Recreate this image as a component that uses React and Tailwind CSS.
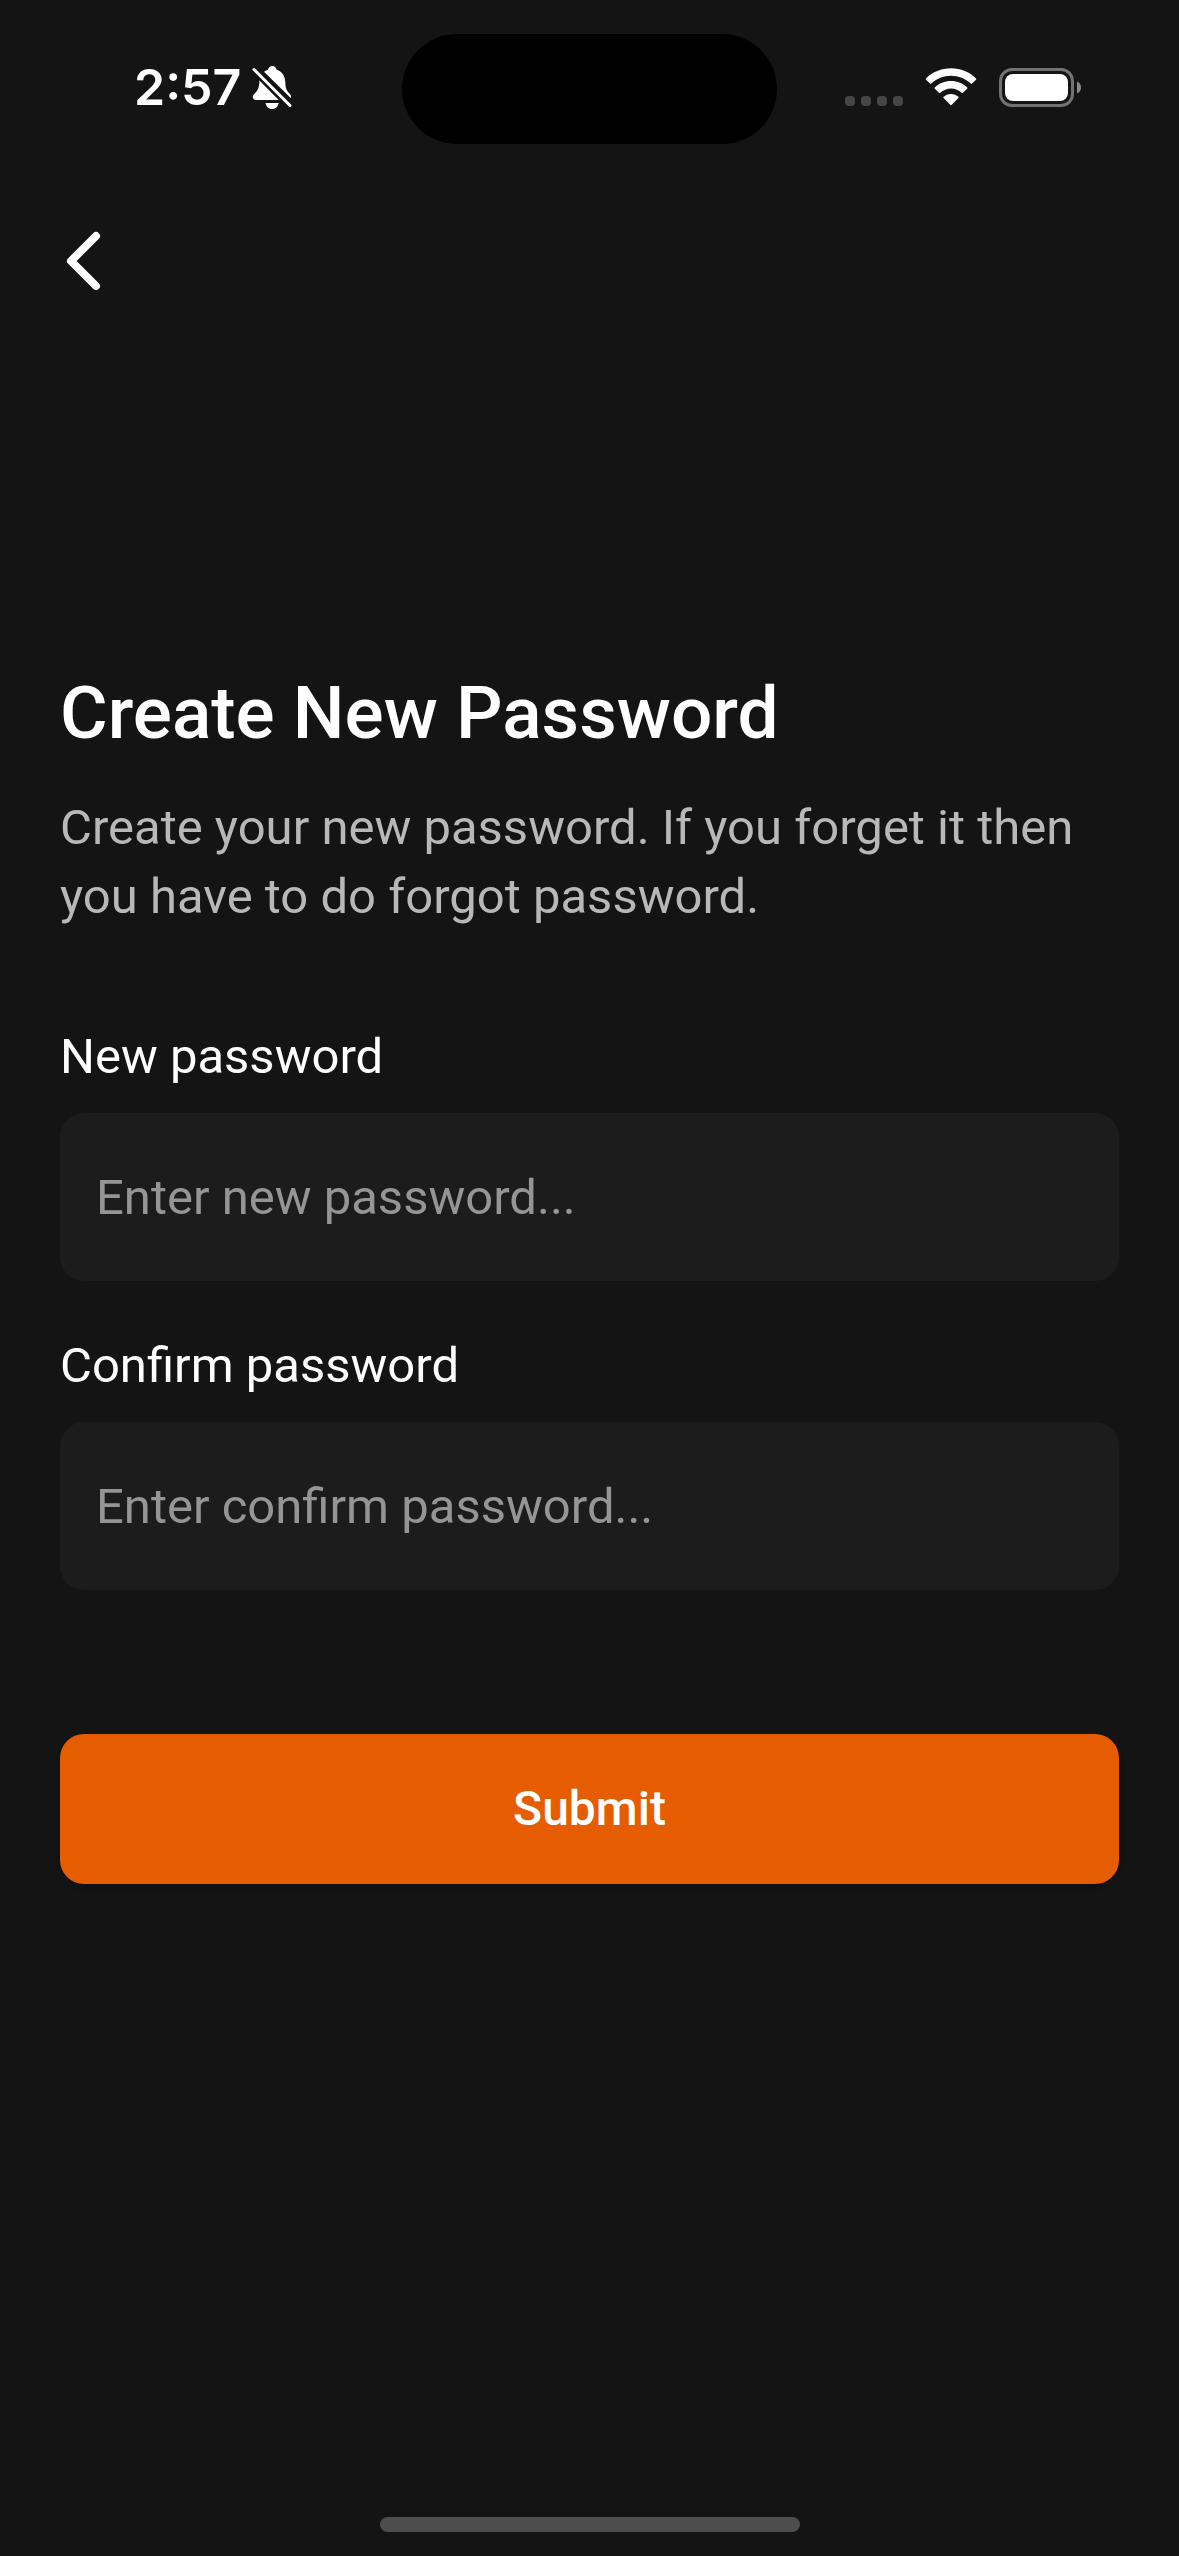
function BellOff() {
  return (
    <svg className="h-[43px] w-[40px]" viewBox="0 0 40 43" aria-label="Silent mode" role="img">
      <path
        fill="#fff"
        d="M12 5.800C13.400 4.800 14.800 4.200 16 3.800C16.600 1.300 18 0 20.300 0S24 1.300 24.700 3.800C30 5.500 33 9.800 33.300 16C33.500 22.500 34.500 24.500 37.500 27.500C39 29 39.500 30.500 38.700 32Z"
      />
      <path fill="#fff" d="M7.500 14L27 34H4C.5 34-.2 30.200 2.200 28C6 24.400 7.200 22 7.500 14Z" />
      <path fill="#fff" d="M13.500 37H26.700C26 40.800 23.500 43 20 43S14.200 40.800 13.500 37Z" />
      <path stroke="#141414" strokeWidth="7" d="M0 2L40 42" />
      <path stroke="#fff" strokeWidth="3" strokeLinecap="round" d="M2 3.500L38 39.500" />
    </svg>
  );
}

function Wifi() {
  return (
    <svg className="h-[38px] w-[52px]" viewBox="0 0 52 38" aria-label="Wi-Fi" role="img">
      <g fill="#fff">
        <path d="M1 10.400C7.500 4 16.300.3 26 .3S44.500 4 51 10.400Q51.600 11 51 11.700L47 15.600Q46.400 16.200 45.700 15.600C40.500 10.700 33.500 7.800 26 7.800S11.500 10.700 6.300 15.600Q5.600 16.200 5 15.600L1 11.700Q.4 11 1 10.400Z" />
        <path d="M9.800 19.500C14 15.400 19.700 13.100 26 13.100S38 15.400 42.200 19.500Q42.800 20.100 42.200 20.700L38 24.800Q37.400 25.400 36.700 24.800C33.800 22.200 30 20.600 26 20.600S18.200 22.200 15.300 24.800Q14.600 25.400 14 24.800L9.800 20.700Q9.200 20.100 9.800 19.500Z" />
        <path d="M18.600 28.800C20.500 27 23.100 25.900 26 25.900S31.500 27 33.400 28.800Q34.100 29.400 33.400 30L26.700 36.800Q26 37.500 25.300 36.800L18.600 30Q17.900 29.400 18.600 28.800Z" />
      </g>
    </svg>
  );
}

function Battery() {
  return (
    <svg className="h-[39px] w-[82px]" viewBox="0 0 82 39" aria-label="Battery full" role="img">
      <rect x="1.500" y="1.500" width="72" height="36" rx="11.500" fill="none" stroke="#727272" strokeWidth="3" />
      <rect x="6" y="6" width="63" height="27" rx="8" fill="#fff" />
      <path fill="#8a8a8a" d="M78 13.500C80.500 14.500 82 16.800 82 19.500S80.500 24.500 78 25.500Z" />
    </svg>
  );
}

function StatusBar() {
  return (
    <header className="grid grid-cols-[1fr_375px_1fr] items-center pt-[34px]">
      <div className="flex items-center gap-[11px] pb-1 pl-[134px]">
        <span className="font-['Inter',sans-serif] text-[50px] leading-[60px] font-semibold">2:57</span>
        <BellOff />
      </div>
      <div className="h-[110px] rounded-full bg-black" />
      <div className="flex items-center justify-end gap-[22px] pr-[98px] pb-1">
        <div className="mt-7 flex gap-[6px]">
          <span className="size-[10px] rounded bg-[#464646]" />
          <span className="size-[10px] rounded bg-[#464646]" />
          <span className="size-[10px] rounded bg-[#464646]" />
          <span className="size-[10px] rounded bg-[#464646]" />
        </div>
        <Wifi />
        <Battery />
      </div>
    </header>
  );
}

function PasswordField({ id, label, placeholder }) {
  return (
    <div className="flex flex-col gap-[28px]">
      <label htmlFor={id} className="text-[49px] leading-[56px]">
        {label}
      </label>
      <input
        id={id}
        type="password"
        placeholder={placeholder}
        className="h-[168px] w-full rounded-3xl bg-[#1c1c1c] px-9 text-[49px] text-white outline-none placeholder:text-[#959595]"
      />
    </div>
  );
}

export default function App() {
  return (
    <div className="flex min-h-screen flex-col bg-[#141414] font-['Roboto',sans-serif] text-white">
      <StatusBar />
      <nav className="px-[60px] pt-[82px]">
        <button type="button" aria-label="Back" className="block">
          <svg className="h-[70px] w-[48px]" viewBox="0 0 48 70" fill="none">
            <path d="M36 10L11 35L36 60" stroke="#fff" strokeWidth="8" strokeLinecap="round" strokeLinejoin="round" />
          </svg>
        </button>
      </nav>
      <main className="px-[60px] pt-[373px]">
        <h1 className="text-[73px] leading-[88px] font-medium">Create New Password</h1>
        <p className="mt-[36px] text-[49px] leading-[69px] text-[#b8b8b8]">
          Create your new password. If you forget it then
          <br />
          you have to do forgot password.
        </p>
        <form className="mt-[98px] flex flex-col" onSubmit={(e) => e.preventDefault()}>
          <div className="flex flex-col gap-[57px]">
            <PasswordField id="new-password" label="New password" placeholder="Enter new password..." />
            <PasswordField id="confirm-password" label="Confirm password" placeholder="Enter confirm password..." />
          </div>
          <button
            type="submit"
            className="mt-36 h-[150px] w-full rounded-3xl bg-[#e65c00] text-[48px] font-medium shadow-md"
          >
            Submit
          </button>
        </form>
      </main>
      <div className="mx-auto mt-auto mb-6 h-[15px] w-[420px] rounded-full bg-[#4d4d4d]" />
    </div>
  );
}
